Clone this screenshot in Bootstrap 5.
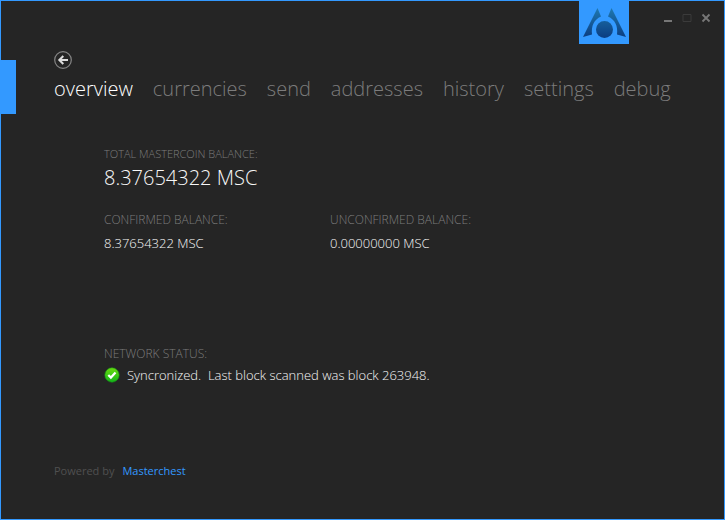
<!DOCTYPE html>
<html lang="en">
<head>
<meta charset="utf-8">
<meta name="viewport" content="width=device-width, initial-scale=1">
<title>Masterchest Wallet</title>
<link rel="stylesheet" href="https://cdn.jsdelivr.net/npm/bootstrap@5.3.0/dist/css/bootstrap.min.css">
<style>
:root { --accent: #3399ff; --panel: #252525; --muted: #7c7c7c; --bright: #f8f8f8; }
body { font-family: "Open Sans", "Noto Sans", sans-serif; background: var(--panel); color: var(--bright); }
.wallet-window { border: 1px solid var(--accent); }
.title-bar { height: 50px; padding-right: 9px; }
.brand-tile { width: 50px; height: 43px; background: var(--accent); margin-right: 29px; }
.window-btn { width: 19px; height: 16px; margin-top: 9px; line-height: 0; }
.accent-bar { width: 15px; height: 54px; background: var(--accent); }
.page-head { margin-left: 38px; height: 63px; }
.back-btn { width: 18px; height: 18px; line-height: 0; }
.wallet-tabs { gap: 20px; margin-top: 4px; font-size: 20px; line-height: 32px; font-weight: 300; }
.wallet-tabs .nav-link { color: var(--muted); }
.wallet-tabs .nav-link.active { color: #fff; }
.wallet-body { padding: 32px 103px 0; }
.caption { color: var(--muted); font-size: 12px; line-height: 16px; font-weight: 300; }
.caption-sm { font-size: 11px; }
.total { font-size: 20px; line-height: 32px; font-weight: 300; }
.amount { font-size: 13px; line-height: 16px; font-weight: 300; margin-top: 7px; }
.balances { margin-top: 18px; }
.balance-col { width: 226px; }
.network { margin-top: 95px; }
.status-line { font-size: 13px; line-height: 16px; font-weight: 300; gap: 7px; margin-top: 5px; }
.wallet-foot { padding: 0 53px 41px; font-size: 11px; line-height: 14px; gap: 8px; color: #505050; }
.wallet-foot a { color: var(--accent); }
</style>
<script src="https://cdn.jsdelivr.net/npm/bootstrap@5.3.0/dist/js/bootstrap.bundle.min.js"></script>
</head>
<body>
<div class="wallet-window d-flex flex-column min-vh-100">
  <header class="title-bar d-flex justify-content-end align-items-start">
    <div class="brand-tile">
      <svg class="d-block" width="50" height="43" viewBox="0 0 50 43" role="img" aria-label="Masterchest">
        <defs><linearGradient id="logoShade" gradientUnits="userSpaceOnUse" x1="0" y1="7" x2="0" y2="37"><stop offset="0" stop-color="#1e78b0"/><stop offset="1" stop-color="#0b3c80"/></linearGradient></defs>
        <g fill="url(#logoShade)"><path d="M18.500 7 4 36 13 33.500C12 25 15 18.500 22 15.500Z"/><path d="M32.500 7 47 36 38 33.500C39 25 36 18.500 29 15.500Z"/><circle cx="25.500" cy="28.500" r="8.500"/></g>
      </svg>
    </div>
    <button class="window-btn btn p-0 border-0" type="button" aria-label="Minimize"><svg width="10" height="10" viewBox="0 0 10 10"><path d="M1 7h8v2H1z" fill="#777"/></svg></button>
    <button class="window-btn btn p-0 border-0" type="button" aria-label="Maximize"><svg width="10" height="10" viewBox="0 0 10 10"><path d="M1 1.500h8v7H1z" fill="none" stroke="#3b3b3b"/></svg></button>
    <button class="window-btn btn p-0 border-0" type="button" aria-label="Close"><svg width="10" height="10" viewBox="0 0 10 10"><path d="M1.500 1.500 8.500 8.500M8.500 1.500 1.500 8.500" stroke="#777" stroke-width="1.800"/></svg></button>
  </header>
  <div class="d-flex align-items-end">
    <div class="accent-bar flex-shrink-0"></div>
    <div class="page-head">
      <button class="back-btn btn p-0 border-0 d-block" type="button" aria-label="Back">
        <svg width="18" height="18" viewBox="0 0 18 18" fill="none"><circle cx="9" cy="9" r="8.300" stroke="#858585" stroke-width="1.200"/><path d="M14 9H5.500M9.300 5 5.300 9l4 4" stroke="#ddd" stroke-width="2"/></svg>
      </button>
      <nav class="wallet-tabs nav flex-nowrap" aria-label="Wallet">
        <a class="nav-link p-0 active" href="#" aria-current="page">overview</a>
        <a class="nav-link p-0" href="#">currencies</a>
        <a class="nav-link p-0" href="#">send</a>
        <a class="nav-link p-0" href="#">addresses</a>
        <a class="nav-link p-0" href="#">history</a>
        <a class="nav-link p-0" href="#">settings</a>
        <a class="nav-link p-0" href="#">debug</a>
      </nav>
    </div>
  </div>
  <main class="wallet-body flex-grow-1">
    <div class="caption caption-sm">TOTAL MASTERCOIN BALANCE:</div>
    <div class="total">8.37654322 MSC</div>
    <div class="balances d-flex">
      <div class="balance-col"><div class="caption">CONFIRMED BALANCE:</div><div class="amount">8.37654322 MSC</div></div>
      <div class="balance-col"><div class="caption">UNCONFIRMED BALANCE:</div><div class="amount">0.00000000 MSC</div></div>
    </div>
    <section class="network">
      <div class="caption">NETWORK STATUS:</div>
      <div class="status-line d-flex align-items-center">
        <svg width="16" height="16" viewBox="0 0 16 16" aria-hidden="true"><defs><linearGradient id="okShade" x1="0" y1="0" x2="0" y2="1"><stop offset="0" stop-color="#6bdb10"/><stop offset="1" stop-color="#12b51a"/></linearGradient></defs><circle cx="8" cy="8" r="7.200" fill="url(#okShade)" stroke="#159515" stroke-width=".6"/><path d="m4.300 8 2.600 2.600 4.600-5" fill="none" stroke="#fff" stroke-width="2.200"/></svg>
        <span>Syncronized.&nbsp; Last block scanned was block 263948.</span>
      </div>
    </section>
  </main>
  <footer class="wallet-foot d-flex"><span>Powered by</span><a class="text-decoration-none" href="#">Masterchest</a></footer>
</div>
</body>
</html>
